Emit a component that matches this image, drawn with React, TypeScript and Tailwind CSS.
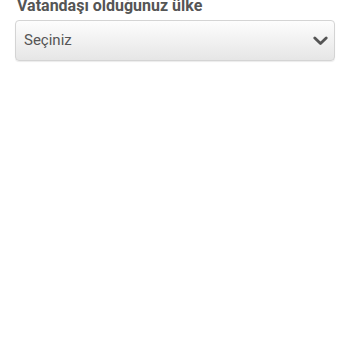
export default function App() {
  return (
    <div className="h-[350px] w-[350px] overflow-hidden bg-white" style={{ fontFamily: 'Roboto, "Liberation Sans", sans-serif' }}>
      <div className="-mt-[5px] px-[15px]">
        <label className="block pl-[2px] text-[16px] font-bold leading-[22px] text-[#555]">Vatandaşı olduğunuz ülke</label>
        <button
          type="button"
          className="mt-[3px] flex h-[41px] w-full items-center justify-between rounded-[4px] border border-[#d4d4d4] bg-gradient-to-b from-[#fdfdfd] to-[#e6e6e6] pl-[8px] pr-[6px] text-left shadow-[0_1px_1px_rgba(0,0,0,0.08)]"
        >
          <span className="text-[15px] text-[#555]">Seçiniz</span>
          <svg width="15" height="10" viewBox="0 0 15 10" className="text-[#555]">
            <path d="M1.8 2 L7.5 7.6 L13.2 2" fill="none" stroke="currentColor" strokeWidth="2.8" strokeLinecap="round" strokeLinejoin="round" />
          </svg>
        </button>
      </div>
    </div>
  )
}
